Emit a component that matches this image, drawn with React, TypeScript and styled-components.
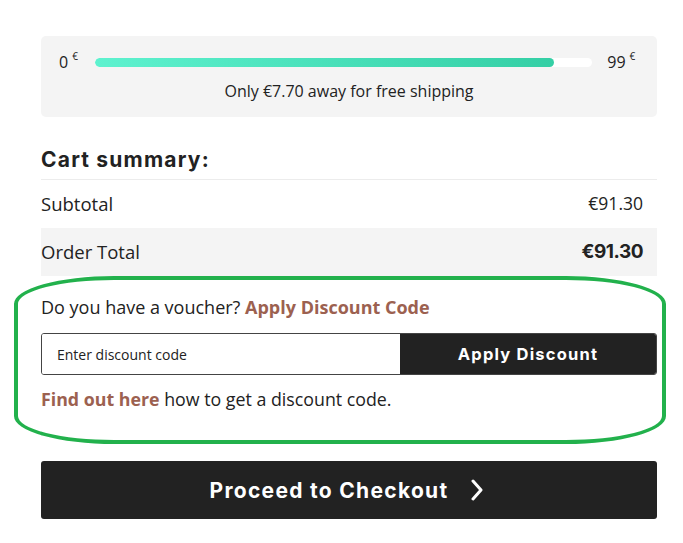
import React from "react";
import styled, { createGlobalStyle } from "styled-components";

const GlobalStyle = createGlobalStyle`
  body {
    margin: 0;
    background: #fff;
    font-family: "Open Sans", "Liberation Sans", sans-serif;
    color: #222;
  }
`;

const Page = styled.div`
  position: relative;
  width: 616px;
  padding: 36px 26px 0 41px;
`;

const ShippingBox = styled.div`
  background: #f4f4f4;
  border-radius: 5px;
  height: 81px;
  box-sizing: border-box;
  padding: 14px 0 0 18px;
  display: flex;
  flex-direction: column;
`;

const BarRow = styled.div`
  display: flex;
  align-items: center;
  height: 24px;
`;

const Limit = styled.span<{ $w: number }>`
  width: ${(p) => p.$w}px;
  font-size: 16px;
  color: #222;
  sup {
    font-size: 10px;
    margin-left: 4px;
    position: relative;
    top: -2px;
  }
`;

const Track = styled.div`
  width: 500px;
  height: 9px;
  background: #fff;
  border-radius: 5px;
  margin-right: 15px;
  overflow: hidden;
`;

const Fill = styled.div`
  height: 100%;
  border-radius: 5px;
  background: linear-gradient(90deg, #5ef2cf, #34cfa5);
`;

const ShipText = styled.div`
  text-align: center;
  margin: 6px 18px 0 0;
  font-size: 16px;
`;

const Title = styled.h2`
  margin: 32px 0 0;
  font-family: "Inter", "Liberation Sans", sans-serif;
  font-weight: 700;
  font-size: 21px;
  letter-spacing: 1.2px;
  line-height: 22px;
  padding-bottom: 8px;
  border-bottom: 1px solid #ececec;
`;

const Row = styled.div<{ $shade?: boolean }>`
  display: flex;
  justify-content: space-between;
  align-items: center;
  height: 48px;
  padding: 0 14px 2px 0;
  box-sizing: border-box;
  background: ${(p) => (p.$shade ? "#f4f4f4" : "transparent")};
  font-size: 18.5px;
`;

const Amount = styled.span<{ $bold?: boolean }>`
  font-family: ${(p) => (p.$bold ? '"Inter", "Liberation Sans", sans-serif' : "inherit")};
  font-weight: ${(p) => (p.$bold ? 700 : 400)};
  font-size: ${(p) => (p.$bold ? 19 : 17.5)}px;
  letter-spacing: ${(p) => (p.$bold ? "-0.5px" : "0")};
`;

const Voucher = styled.div`
  padding-top: 20px;
  font-size: 18px;
  line-height: 22px;
`;

const Accent = styled.span`
  color: #9c6150;
  font-weight: 700;
`;

const CodeForm = styled.div`
  display: flex;
  margin-top: 15px;
  height: 42px;
  border: 1px solid #444;
  border-radius: 3px;
  overflow: hidden;
  box-sizing: border-box;
`;

const CodeInput = styled.input`
  flex: 1;
  border: none;
  outline: none;
  padding: 0 15px;
  font-family: inherit;
  font-size: 14px;
  color: #222;
  &::placeholder {
    color: #222;
  }
`;

const ApplyButton = styled.button`
  width: 256px;
  border: none;
  background: #222;
  color: #fff;
  font-family: "Inter", "Liberation Sans", sans-serif;
  font-weight: 700;
  font-size: 16.5px;
  letter-spacing: 1.2px;
`;

const FindOut = styled.div`
  margin-top: 13px;
  font-size: 17.8px;
  line-height: 22px;
`;

const Checkout = styled.button`
  margin-top: 51px;
  width: 100%;
  height: 58px;
  border: none;
  border-radius: 3px;
  background: #222;
  color: #fff;
  font-family: "Inter", "Liberation Sans", sans-serif;
  font-weight: 700;
  font-size: 21px;
  letter-spacing: 1.3px;
  display: flex;
  align-items: center;
  justify-content: center;
  gap: 22px;
  padding: 0 4px 0 0;
`;

const Highlight = styled.div`
  position: absolute;
  left: 14px;
  top: 276px;
  width: 652px;
  height: 168px;
  box-sizing: border-box;
  border: 4px solid #22b14c;
  border-radius: 100px / 28px;
  pointer-events: none;
`;

export default function App() {
  return (
    <>
      <GlobalStyle />
      <Page>
        <ShippingBox>
          <BarRow>
            <Limit $w={36}>
              0<sup>€</sup>
            </Limit>
            <Track>
              <Fill style={{ width: `${(91.3 / 99) * 100}%` }} />
            </Track>
            <Limit $w={50}>
              99<sup>€</sup>
            </Limit>
          </BarRow>
          <ShipText>Only €7.70 away for free shipping</ShipText>
        </ShippingBox>

        <Title>Cart summary:</Title>
        <Row>
          <span>Subtotal</span>
          <Amount>€91.30</Amount>
        </Row>
        <Row $shade>
          <span>Order Total</span>
          <Amount $bold>€91.30</Amount>
        </Row>

        <Voucher>
          Do you have a voucher? <Accent>Apply Discount Code</Accent>
        </Voucher>
        <CodeForm>
          <CodeInput placeholder="Enter discount code" />
          <ApplyButton>Apply Discount</ApplyButton>
        </CodeForm>
        <FindOut>
          <Accent>Find out here</Accent> how to get a discount code.
        </FindOut>

        <Checkout>
          Proceed to Checkout
          <svg width="14" height="22" viewBox="0 0 14 22" fill="none">
            <path d="M3 2l8 9-8 9" stroke="#fff" strokeWidth="3" strokeLinecap="round" strokeLinejoin="round" />
          </svg>
        </Checkout>
        <Highlight />
      </Page>
    </>
  );
}
